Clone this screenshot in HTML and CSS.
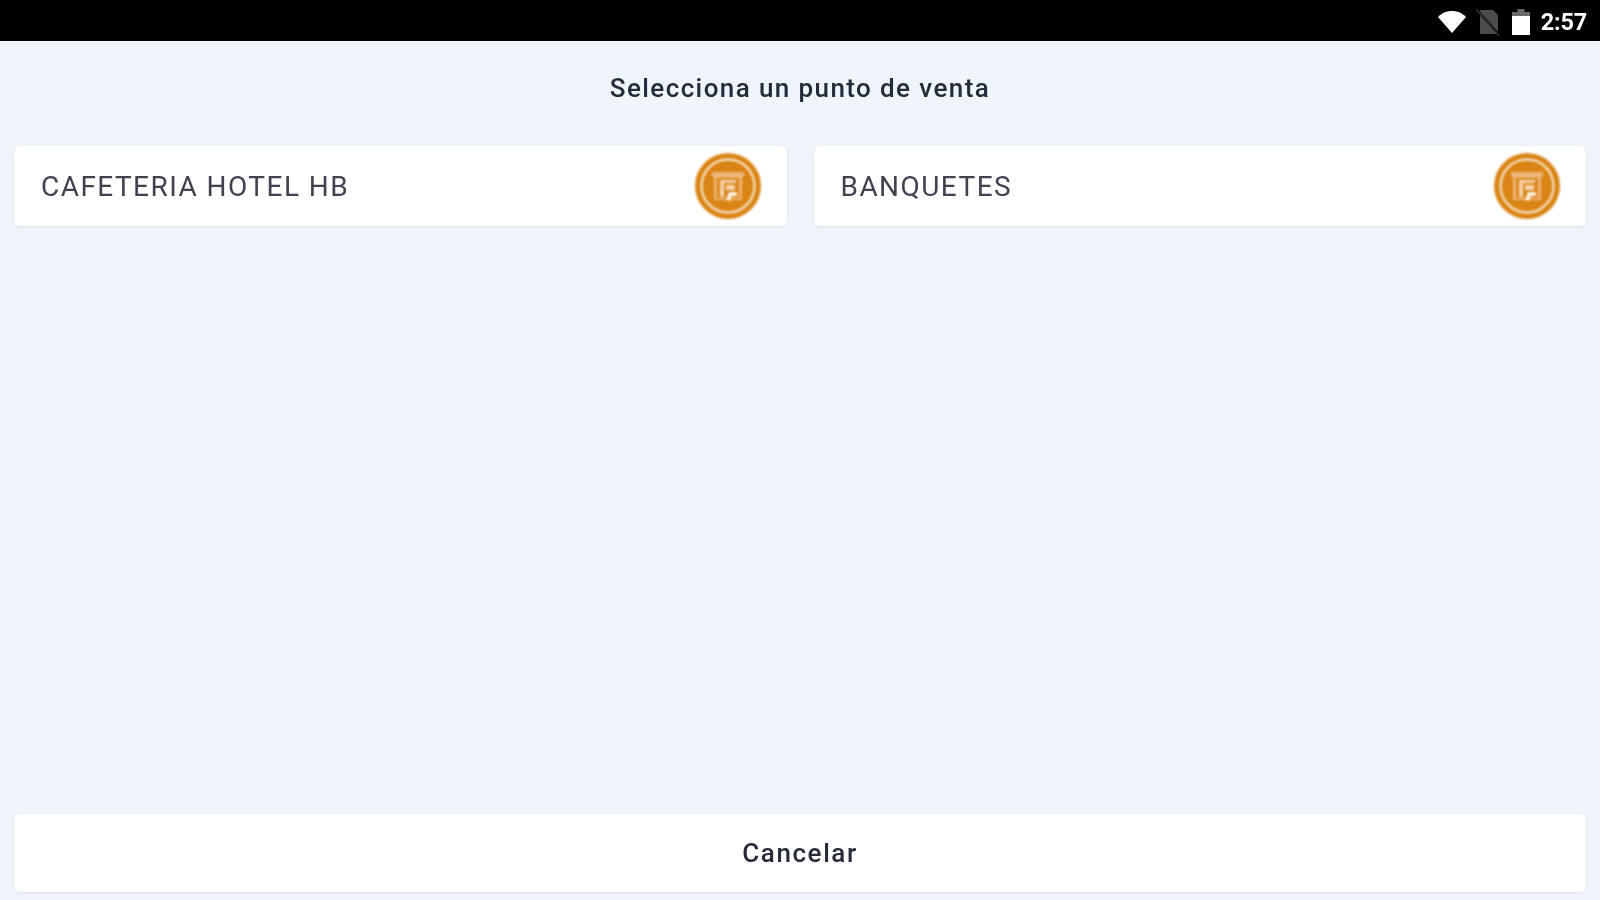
FILE: index.html
```html
<!DOCTYPE html>
<html lang="es">
<head>
<meta charset="utf-8">
<title>Selecciona un punto de venta</title>
<link rel="stylesheet" href="styles.css">
</head>
<body>
<div class="screen">
  <header class="status-bar">
    <svg class="wifi" viewBox="0 0 30 24" width="30" height="24"><path d="M1 7C5 3 9 1 15 1s10 2 14 6L15 23Z" fill="#fff"/></svg>
    <svg class="nosim" viewBox="0 0 24 28" width="24" height="28"><path d="M4 2h13l5 5v19H4Z" fill="#4c4c4c"/><path d="M1 2l22 25" stroke="#000" stroke-width="2.500"/><path d="M0 1l23 27" stroke="#3c3c3c" stroke-width="1.200"/></svg>
    <svg class="battery" viewBox="0 0 18 26" width="18" height="26"><path d="M5.500 0h7v3h5.500v23H0V3h5.500Z" fill="#6a6a6a"/><path d="M0 7h18v19H0Z" fill="#fff"/></svg>
    <span class="clock">2:57</span>
  </header>
  <main class="content">
    <h1 class="title">Selecciona un punto de venta</h1>
    <div class="grid">
      <button class="card">
        <span class="card-label">CAFETERIA HOTEL HB</span>
        <svg class="pos-icon" viewBox="0 0 66 66" width="66" height="66">
          <circle cx="33" cy="33" r="33" fill="#da8415"/>
          <circle cx="33" cy="33" r="26.500" fill="none" stroke="#fbeedd" stroke-width="2"/>
          <path d="M17 19h32v5h-2v23H19V24h-2Z" fill="#eeb67a"/>
          <path d="M22 25h22v20H22Z" fill="#da8415"/>
          <path d="M25 27h16v3H29v14h-4Z" fill="#f5d4ad"/>
          <path d="M31 32h9v5h-9Z" fill="#fff3e3" opacity=".75"/>
          <path d="M31 47l3-8h8v4h-5l-2 5Z" fill="#fff3e3"/>
        </svg>
      </button>
      <button class="card">
        <span class="card-label">BANQUETES</span>
        <svg class="pos-icon" viewBox="0 0 66 66" width="66" height="66">
          <circle cx="33" cy="33" r="33" fill="#da8415"/>
          <circle cx="33" cy="33" r="26.500" fill="none" stroke="#fbeedd" stroke-width="2"/>
          <path d="M17 19h32v5h-2v23H19V24h-2Z" fill="#eeb67a"/>
          <path d="M22 25h22v20H22Z" fill="#da8415"/>
          <path d="M25 27h16v3H29v14h-4Z" fill="#f5d4ad"/>
          <path d="M31 32h9v5h-9Z" fill="#fff3e3" opacity=".75"/>
          <path d="M31 47l3-8h8v4h-5l-2 5Z" fill="#fff3e3"/>
        </svg>
      </button>
    </div>
    <button class="cancel"><span class="cancel-label">Cancelar</span></button>
  </main>
</div>
</body>
</html>
```
FILE: styles.css
```css
* { box-sizing: border-box; }
html, body { margin: 0; height: 100%; overflow: hidden; }
body { font-family: Roboto, "Liberation Sans", sans-serif; background: #f0f5fc; }
.screen { display: flex; flex-direction: column; height: 900px; }
.status-bar {
  flex: 0 0 41px; background: #000; color: #fff;
  display: flex; align-items: center; justify-content: flex-end;
  padding: 2px 13px 0 0;
}
.wifi { margin-right: 9px; }
.nosim { margin-right: 12px; }
.battery { margin-right: 11px; }
.clock { font-size: 23.500px; font-weight: 700; letter-spacing: -.2px; filter: blur(.5px); }
.content { flex: 1; display: flex; flex-direction: column; padding: 0 14px 8px; }
.title {
  margin: 0; height: 105px; padding-top: 30px;
  font-size: 26px; line-height: 34px; font-weight: 500; text-align: center;
  color: #262b3a; letter-spacing: 1.400px; filter: blur(.6px);
}
.grid { display: grid; grid-template-columns: 1fr 1fr; gap: 27px; }
.card, .cancel {
  border: 0; background: #fff; border-radius: 6px; font-family: inherit;
  box-shadow: 0 1px 3px rgba(120,140,165,.2);
}
.card {
  height: 80px; display: flex; align-items: center; justify-content: space-between;
  padding: 0 26px 0 27px;
}
.card-label { font-size: 28px; color: #3f4350; letter-spacing: 1.450px; filter: blur(.6px); }
.pos-icon { filter: blur(.8px); }
.cancel { margin-top: auto; height: 78px; width: 100%; }
.cancel-label {
  display: inline-block; font-size: 26px; font-weight: 500;
  letter-spacing: 1.600px; color: #262b3a; filter: blur(.6px);
}
```
